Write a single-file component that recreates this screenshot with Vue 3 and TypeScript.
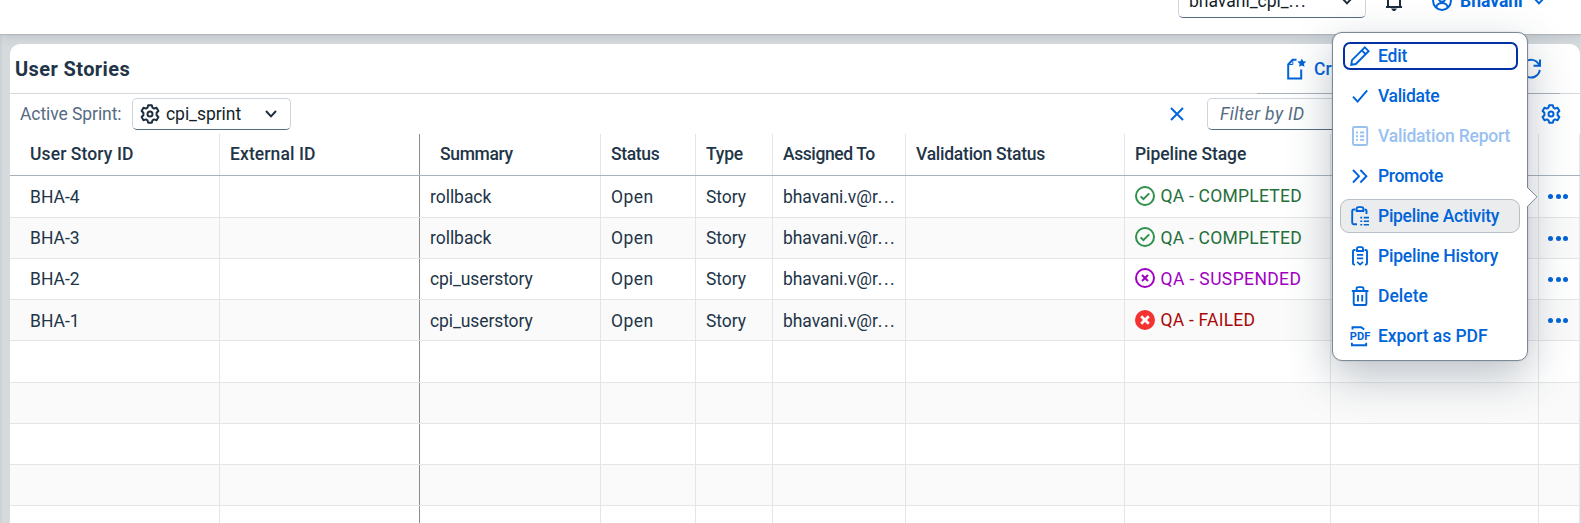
<script setup lang="ts">
interface Column {
  label: string
  tracking: number
  indent?: boolean
  frozen?: boolean
}

type StageKind = 'completed' | 'suspended' | 'failed'

interface Story {
  id: string
  summary: string
  summaryTracking: number
  stage: string
  stageKind: StageKind
  stageTracking: number
}

interface MenuItem {
  label: string
  icon: string
  tracking: number
  state?: 'focused' | 'disabled' | 'hovered'
}

const columns: Column[] = [
  { label: 'User Story ID', tracking: 0.1, indent: true },
  { label: 'External ID', tracking: 0.1, frozen: true },
  { label: 'Summary', tracking: -0.35, indent: true },
  { label: 'Status', tracking: -0.35 },
  { label: 'Type', tracking: -0.2 },
  { label: 'Assigned To', tracking: -0.42 },
  { label: 'Validation Status', tracking: -0.25 },
  { label: 'Pipeline Stage', tracking: -0.08 },
  { label: '', tracking: 0 },
  { label: '', tracking: 0 },
]

const stories: Story[] = [
  { id: 'BHA-4', summary: 'rollback', summaryTracking: -0.04, stage: 'QA - COMPLETED', stageKind: 'completed', stageTracking: 0.23 },
  { id: 'BHA-3', summary: 'rollback', summaryTracking: -0.04, stage: 'QA - COMPLETED', stageKind: 'completed', stageTracking: 0.23 },
  { id: 'BHA-2', summary: 'cpi_userstory', summaryTracking: -0.1, stage: 'QA - SUSPENDED', stageKind: 'suspended', stageTracking: 0.38 },
  { id: 'BHA-1', summary: 'cpi_userstory', summaryTracking: -0.1, stage: 'QA - FAILED', stageKind: 'failed', stageTracking: 0.23 },
]

const emptyRows = 5

const menu: MenuItem[] = [
  { label: 'Edit', icon: 'edit', tracking: -0.15, state: 'focused' },
  { label: 'Validate', icon: 'accept', tracking: -0.32 },
  { label: 'Validation Report', icon: 'report', tracking: -0.2, state: 'disabled' },
  { label: 'Promote', icon: 'promote', tracking: -0.34 },
  { label: 'Pipeline Activity', icon: 'activity', tracking: -0.28, state: 'hovered' },
  { label: 'Pipeline History', icon: 'history', tracking: -0.22 },
  { label: 'Delete', icon: 'delete', tracking: 0.03 },
  { label: 'Export as PDF', icon: 'pdf', tracking: -0.06 },
]

const track = (value: number) => ({ letterSpacing: `${value}px` })

const gearPath =
  'M8.2 1.2h3.6l.7 2.5 1.5.9 2.5-.8 1.9 3.2-1.8 1.8v2.4l1.8 1.8-1.9 3.2-2.5-.8-1.5.9-.7 2.5H8.2l-.7-2.5-1.5-.9-2.5.8L1.6 13l1.8-1.8V8.8L1.6 7l1.9-3.2 2.5.8 1.5-.9z'
</script>

<template>
  <div class="page">
    <header class="shell">
      <div class="shell-bar">
        <div class="select tenant">
          <span class="tenant-name">bhavani_cpi_<span class="dots">...</span></span>
          <svg class="chev" viewBox="0 0 14 10"><path d="M2 2l5 5.4L12 2" /></svg>
        </div>
        <svg class="bell" viewBox="0 0 20 22">
          <path d="M2 17h16M4 17V8a6 6 0 0 1 12 0v9" />
          <path class="solid" d="M7 18.5h6l-2 2.5H9z" />
        </svg>
        <svg class="avatar" viewBox="0 0 20 20">
          <circle cx="10" cy="10" r="8.9" />
          <circle cx="10" cy="7.5" r="3.2" />
          <path d="M4.2 16c1-3 3-4 5.8-4s4.8 1 5.8 4" />
        </svg>
        <span class="user">Bhavani</span>
        <svg class="chev user-chev" viewBox="0 0 14 10"><path d="M2 2l5 5.4L12 2" /></svg>
      </div>
    </header>

    <main class="card">
      <div class="title-bar">
        <h1>User Stories</h1>
        <div class="create">
          <svg viewBox="0 0 20 22">
            <path d="M10.5 1.7H6.6L2.2 6.5v13.9h13V11.5" />
            <path d="M6.8 2v4.500H2" class="thin" />
            <path class="solid" d="M15.8 .4l1.400 2.800 3 .4-2.200 2.200.5 3-2.700-1.400-2.700 1.400.5-3-2.200-2.200 3-.4z" />
          </svg>
          <span>Create</span>
        </div>
        <svg class="refresh" viewBox="0 0 20 20">
          <path d="M18.800 10.800A8.900 8.900 0 1 1 18 5.800" />
          <path d="M19 .5v6.200h-6.500" />
        </svg>
      </div>
      <div class="rule"><i></i></div>

      <div class="filter-bar">
        <label>Active Sprint:</label>
        <div class="select sprint">
          <svg class="gear" viewBox="0 0 20 20"><path :d="gearPath" /><circle cx="10" cy="10" r="2.5" /></svg>
          <span>cpi_sprint</span>
          <svg class="chev" viewBox="0 0 14 10"><path d="M2 2l5 5.4L12 2" /></svg>
        </div>
        <svg class="clear" viewBox="0 0 14 14"><path d="M1 1l12 12M13 1L1 13" /></svg>
        <div class="select search">Filter by ID</div>
        <svg class="gear settings" viewBox="0 0 20 20"><path :d="gearPath" /><circle cx="10" cy="10" r="2.5" /></svg>
      </div>

      <div class="table">
        <div class="row head">
          <div v-for="(c, i) in columns" :key="i" class="cell" :class="{ indent: c.indent, frozen: c.frozen }">
            <span :style="track(c.tracking)">{{ c.label }}</span>
          </div>
        </div>
        <div v-for="s in stories" :key="s.id" class="row">
          <div class="cell indent">{{ s.id }}</div>
          <div class="cell frozen"></div>
          <div class="cell"><span :style="track(s.summaryTracking)">{{ s.summary }}</span></div>
          <div class="cell open">Open</div>
          <div class="cell type">Story</div>
          <div class="cell mail">bhavani.v@r<span class="dots">...</span></div>
          <div class="cell"></div>
          <div class="cell stage" :class="s.stageKind">
            <svg viewBox="0 0 20 20">
              <circle cx="10" cy="10" r="9" />
              <path v-if="s.stageKind === 'completed'" d="M5.6 10.4l2.8 2.8 5.8-5.8" />
              <path v-else-if="s.stageKind === 'suspended'" d="M7 7l6 6M13 7l-6 6" />
              <path v-else d="M6.2 6.2l7.6 7.6M13.8 6.2l-7.6 7.6" />
            </svg>
            <span :style="track(s.stageTracking)">{{ s.stage }}</span>
          </div>
          <div class="cell"></div>
          <div class="cell more"><i></i><i></i><i></i></div>
        </div>
        <div v-for="n in emptyRows" :key="n" class="row">
          <div v-for="(c, i) in columns" :key="i" class="cell" :class="{ frozen: c.frozen }"></div>
        </div>
      </div>
    </main>

    <nav class="menu">
      <svg class="arrow" viewBox="0 0 12 22"><path d="M0 1l10 9.8L0 21" /></svg>
      <div v-for="m in menu" :key="m.label" class="item" :class="m.state">
        <svg viewBox="0 0 20 20">
          <g v-if="m.icon === 'edit'">
            <path d="M1.200 18.800l.8-4.600L14.800 1.400l3.800 3.800L5.800 18zM11.800 4.400l3.800 3.800" />
          </g>
          <path v-else-if="m.icon === 'accept'" d="M3 10.6l4.6 5L17.2 4.3" />
          <g v-else-if="m.icon === 'report'">
            <rect x="3" y="1" width="14.2" height="18" rx="1.2" />
            <path d="M6 6.500h2M10 6.500h4.200M6 10.200h2M10 10.200h4.200M6 13.900h2M10 13.900h4.200" />
          </g>
          <path v-else-if="m.icon === 'promote'" d="M3 4l6 6.200L3 16.500M10.400 4l6 6.200-6 6.300" />
          <g v-else-if="m.icon === 'activity'">
            <path d="M5.500 3.500H3.700q-1.500 0-1.500 1.500v11.800q0 1.500 1.500 1.500H7M14.500 3.500q2 0 2 1.500V8" />
            <path d="M6.700 5V2.500a1.500 1.500 0 0 1 1.500-1.400h3.600a1.500 1.500 0 0 1 1.500 1.400V5z" />
            <path d="M10.300 11.600h1.900M13.800 11.600H19M10.300 15.200h1.900M13.800 15.200H19M10.300 18.800h1.900M13.800 18.800H19" stroke-width="1.600" />
          </g>
          <g v-else-if="m.icon === 'history'">
            <path d="M5.500 4H4.300Q3 4 3 5.300v12q0 1.300 1.300 1.300H5M14.500 4h1.200Q17 4 17 5.300v12q0 1.300-1.300 1.300H15" />
            <path d="M7 5V2.500a1.400 1.400 0 0 1 1.400-1.400h3.200A1.400 1.400 0 0 1 13 2.500V5z" />
            <path d="M7 8.800h6.200M7 12.400h6.200M7.200 15.800l2.900 2.800 2.900-2.800" stroke-width="1.700" />
          </g>
          <g v-else-if="m.icon === 'delete'">
            <path d="M1.800 5h16.600M6.600 5V2.800Q6.600 1.100 8.200 1.100h3.700q1.600 0 1.600 1.700V5M3.700 5v12.400Q3.700 19 5.300 19h9.500q1.600 0 1.600-1.600V5M8 9v6.500M12.200 9v6.500" />
          </g>
          <g v-else>
            <path d="M2.500 3.600V1.200h8.700l3 2.400M1.900 16.800V19.200h14.300v-2.400" />
            <text x="-.2" y="13.900" textLength="20.400" lengthAdjust="spacingAndGlyphs">PDF</text>
          </g>
        </svg>
        <span :style="track(m.tracking)">{{ m.label }}</span>
      </div>
    </nav>
  </div>
</template>

<style>
html,
body {
  margin: 0;
  overflow: hidden;
}
</style>

<style scoped>
* {
  box-sizing: border-box;
}
.page {
  position: relative;
  width: 1581px;
  height: 523px;
  overflow: hidden;
  background: linear-gradient(90deg, #c9d0d5 0, #d5dadd 3px, #d5dadd 100%);
  font: 400 17.5px/22px Roboto, "Liberation Sans", sans-serif;
  color: #223548;
  white-space: nowrap;
}
svg {
  display: block;
  flex: none;
  fill: none;
  stroke: currentColor;
  stroke-width: 2;
  overflow: visible;
}
.solid {
  fill: currentColor;
  stroke: none;
}
.thin {
  stroke-width: 1;
}
.shell {
  display: flex;
  align-items: flex-end;
  height: 34px;
  background: #fff;
  box-shadow: 0 1px 1px rgba(85, 95, 105, .18), 0 2px 12px rgba(85, 95, 105, .2);
}
.shell-bar {
  display: flex;
  align-items: center;
  height: 66px;
  padding-left: 1178px;
}
.select {
  display: flex;
  align-items: center;
  height: 32px;
  border: 1px solid #ccd5dd;
  border-bottom-color: #556b81;
  border-radius: 5px;
  background: #fff;
  color: #131e29;
}
.chev {
  width: 14px;
  height: 10px;
  color: #1d2d3e;
}
.tenant {
  height: 33px;
  width: 188px;
  padding: 0 11px 0 10px;
  justify-content: space-between;
}
.dots {
  letter-spacing: 1.5px;
}
.bell {
  width: 20px;
  height: 22px;
  margin-left: 18px;
  color: #1d2d3e;
}
.avatar {
  width: 20px;
  height: 20px;
  margin-left: 28px;
  color: #0064d9;
}
.user {
  margin-left: 8px;
  font-weight: 700;
  color: #0064d9;
}
.user-chev {
  margin-left: 9px;
  color: #0064d9;
}
.card {
  width: 1570px;
  height: 500px;
  margin: 10px 0 0 10px;
  border-radius: 10px 10px 0 0;
  overflow: hidden;
  background: #fff;
}
.title-bar {
  display: flex;
  align-items: center;
  height: 49px;
  padding: 0 39px 0 5px;
}
h1 {
  margin: 0 auto 0 0;
  font-size: 20px;
  letter-spacing: .4px;
  font-weight: 700;
  line-height: 24px;
}
.create {
  display: flex;
  align-items: center;
  gap: 8px;
  width: 235px;
  color: #0064d9;
  font-weight: 500;
}
.create svg {
  width: 20px;
  height: 22px;
}
.refresh {
  width: 20px;
  height: 20px;
  color: #0064d9;
}
.rule {
  height: 1px;
  padding-left: 1247px;
  background: #d9d9d9;
}
.rule i {
  display: block;
  width: 303px;
  height: 1px;
  background: #a8b2bc;
}
.filter-bar {
  display: flex;
  align-items: center;
  height: 40px;
  padding-left: 10px;
}
.filter-bar label {
  width: 112px;
  letter-spacing: -.08px;
  color: #556b82;
}
.sprint {
  width: 159px;
  padding: 0 12px 0 7px;
}
.sprint .chev {
  margin-left: auto;
}
.sprint span {
  margin-left: 6px;
  letter-spacing: -.05px;
}
.gear {
  width: 20px;
  height: 20px;
  stroke-linejoin: round;
  color: #1d2d3e;
}
.clear {
  width: 14px;
  height: 14px;
  margin-left: 878.5px;
  color: #0064d9;
}
.search {
  width: 316px;
  margin-left: 23.5px;
  padding-left: 12px;
  font-style: italic;
  letter-spacing: .4px;
  color: #556b82;
}
.settings {
  margin-left: 18px;
  color: #0064d9;
}
.table {
  display: grid;
  grid-template-rows: 42px 42px 41px 41px 41px 42px 41px 41px 41px 42px;
}
.row {
  display: grid;
  grid-template-columns: 210px 200px 181px 95px 77px 133px 219px 206px 208px 41px;
  border-bottom: 1px solid #e5e5e5;
  background: #fff;
}
.row:nth-child(odd) {
  background: #fafafa;
}
.row.head {
  border-bottom-color: #a8b2bc;
  background: #fff;
  font-weight: 500;
}
.head .cell {
  padding-bottom: 2px;
}
.cell {
  display: flex;
  align-items: center;
  min-width: 0;
  padding-left: 10px;
  border-right: 1px solid #e5e5e5;
}
.row:nth-child(5) .cell {
  padding-top: 1px;
}
.indent {
  padding-left: 20px;
}
.frozen {
  border-right-color: #8c8c8c;
}
.open {
  letter-spacing: .45px;
}
.type {
  letter-spacing: -.05px;
}
.mail {
  letter-spacing: -.05px;
}
.stage {
  gap: 5.5px;
  padding-bottom: 1px;
}
.stage svg {
  width: 20px;
  height: 20px;
  margin-bottom: 1px;
}
.completed {
  color: #256f3a;
}
.completed svg {
  color: #30914c;
}
.suspended {
  color: #a100c2;
}
.failed {
  color: #aa0808;
}
.failed svg circle {
  fill: #f53232;
  stroke: #f53232;
}
.failed svg path {
  stroke: #fff;
  stroke-width: 2.8;
}
.more {
  gap: 2.5px;
  padding-left: 9px;
}
.more i {
  width: 5px;
  height: 5px;
  border-radius: 50%;
  background: #0064d9;
}
.menu {
  position: absolute;
  left: 1332px;
  top: 32px;
  width: 196px;
  height: 329px;
  padding: 3px 7px;
  border: 1px solid #7d8896;
  border-radius: 10px;
  background: #fff;
  box-shadow: 0 0 2px rgba(34, 53, 72, .2), 0 16px 44px rgba(34, 53, 72, .3);
  color: #0064d9;
  font-weight: 500;
}
.arrow {
  position: absolute;
  left: 194px;
  top: 153px;
  width: 12px;
  height: 22px;
}
.arrow path {
  fill: #fff;
  stroke: #7d8896;
  stroke-width: 1;
}
.item {
  display: flex;
  align-items: center;
  gap: 8px;
  height: 34px;
  margin-bottom: 6px;
  padding: 0 0 1px 9px;
  border: 1px solid transparent;
  border-radius: 9px;
}
.item svg {
  width: 20px;
  height: 20px;
  stroke-width: 1.9;
}
.item text {
  font: 700 10px Roboto, sans-serif;
  fill: currentColor;
  stroke: none;
}
.focused {
  height: 28px;
  margin: 6px 2px 9px 3px;
  padding: 0 0 1px 5px;
  border: 2px solid #0032a5;
  border-radius: 7px;
}
.disabled {
  color: #99c1f0;
}
.hovered {
  border-color: #b8bec6;
  background: #eaecee;
}
</style>
